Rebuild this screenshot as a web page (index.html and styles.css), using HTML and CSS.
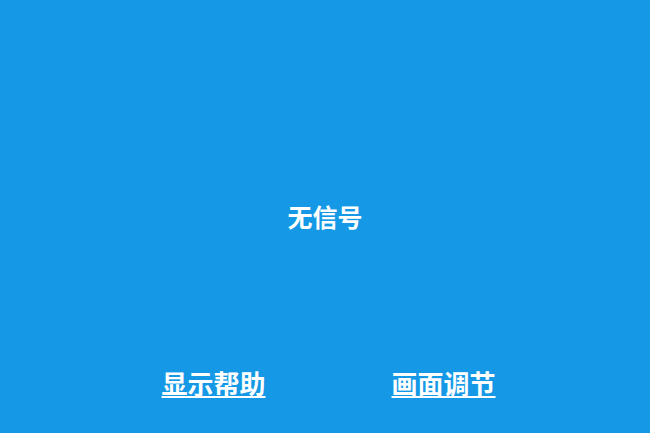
FILE: index.html
```html
<!DOCTYPE html>
<html lang="zh-CN">
<head>
<meta charset="utf-8">
<link rel="stylesheet" href="styles.css">
</head>
<body>
<div class="screen">
  <div class="status">无信号</div>
  <div class="links">
    <a class="link" href="#">显示帮助</a>
    <a class="link" href="#">画面调节</a>
  </div>
</div>
</body>
</html>
```
FILE: styles.css
```css
html, body {
  margin: 0;
  padding: 0;
  width: 650px;
  height: 433px;
  overflow: hidden;
  background: #1599e6;
}
.screen {
  width: 650px;
  height: 433px;
  display: flex;
  flex-direction: column;
  align-items: center;
  font-family: "Noto Sans CJK SC", "Noto Sans", sans-serif;
  color: #ffffff;
}
.status {
  margin-top: 200px;
  font-size: 25px;
  line-height: 32px;
  font-weight: 700;
}
.links {
  margin-top: 134px;
  display: flex;
  gap: 126px;
  padding-left: 7px;
}
.link {
  color: #ffffff;
  font-size: 26px;
  line-height: 34px;
  font-weight: 700;
  text-decoration: underline;
  text-underline-offset: 2px;
  text-decoration-thickness: 2px;
}
```
